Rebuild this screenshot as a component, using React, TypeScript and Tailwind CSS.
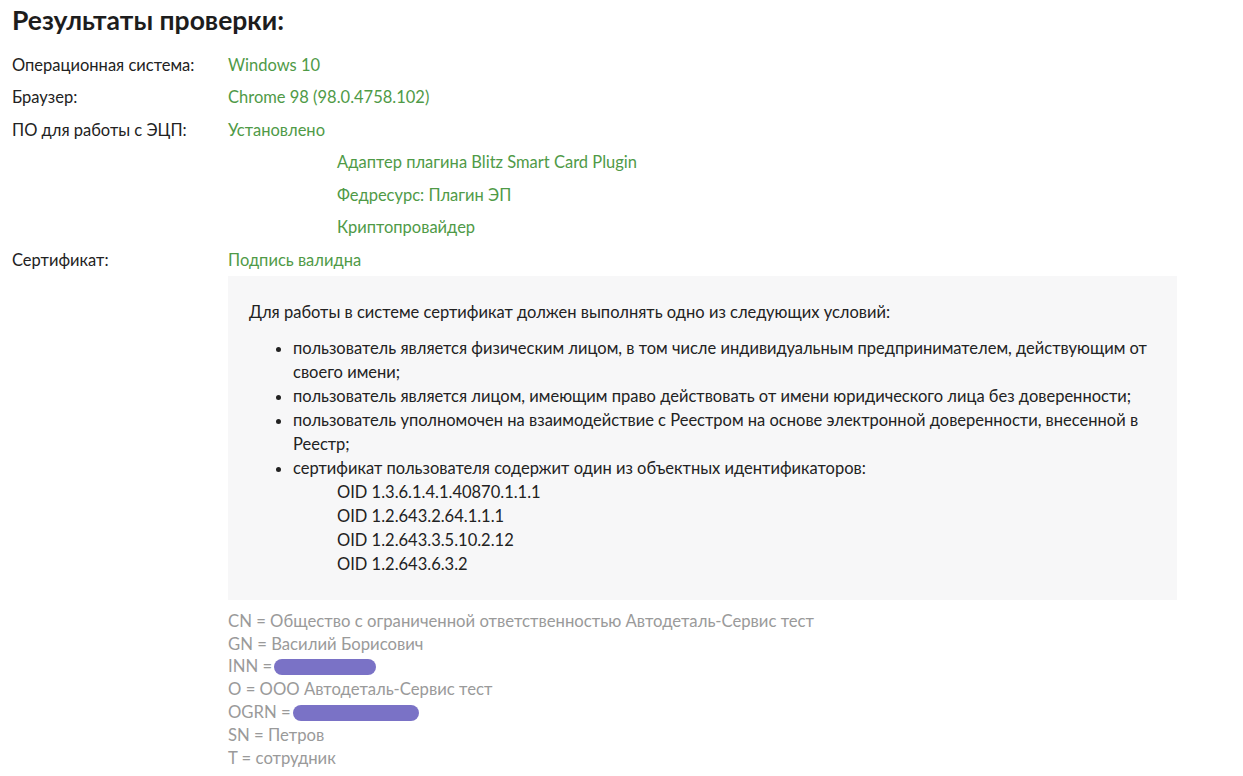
const GREEN = "text-[#4f9a47]";

const rows: { label: string; value: string; subs?: string[] }[] = [
  { label: "Операционная система:", value: "Windows 10" },
  { label: "Браузер:", value: "Chrome 98 (98.0.4758.102)" },
  {
    label: "ПО для работы с ЭЦП:",
    value: "Установлено",
    subs: [
      "Адаптер плагина Blitz Smart Card Plugin",
      "Федресурс: Плагин ЭП",
      "Криптопровайдер",
    ],
  },
  { label: "Сертификат:", value: "Подпись валидна" },
];

const conditions = [
  "пользователь является физическим лицом, в том числе индивидуальным предпринимателем, действующим от своего имени;",
  "пользователь является лицом, имеющим право действовать от имени юридического лица без доверенности;",
  "пользователь уполномочен на взаимодействие с Реестром на основе электронной доверенности, внесенной в Реестр;",
];

const oids = [
  "OID 1.3.6.1.4.1.40870.1.1.1",
  "OID 1.2.643.2.64.1.1.1",
  "OID 1.2.643.3.5.10.2.12",
  "OID 1.2.643.6.3.2",
];

// purple marker strokes that hide personal data in the screenshot
function Redacted({ w }: { w: string }) {
  return <span className={`ml-[2px] inline-block h-[16px] ${w} rounded-full bg-[#7a72c6] align-[-3px]`} />;
}

export default function App() {
  return (
    <div className="min-h-screen bg-white px-3 pt-[6px] font-['Lato',sans-serif] text-[16.5px] text-[#222]">
      <h1 className="text-[26.5px] font-bold leading-[28px] text-[#1d1d1d]">Результаты проверки:</h1>

      <div className="mt-[14.75px] leading-[32.5px]">
        {rows.map((r) => (
          <div key={r.label}>
            <div className="flex">
              <span className="w-[216px] shrink-0">{r.label}</span>
              <span className={GREEN}>{r.value}</span>
            </div>
            {r.subs?.map((s) => (
              <div key={s} className={`pl-[325px] ${GREEN}`}>
                {s}
              </div>
            ))}
          </div>
        ))}
      </div>

      <div className="ml-[216px] w-[949px] bg-[#f7f7f8] pb-[24px] pl-[21px] pr-[17px] pt-[24px] leading-[24px] text-[#222]">
        <p>Для работы в системе сертификат должен выполнять одно из следующих условий:</p>
        <ul className="mt-[12px] list-disc pl-[44px]">
          {conditions.map((c) => (
            <li key={c}>{c}</li>
          ))}
          <li>
            сертификат пользователя содержит один из объектных идентификаторов:
            <div className="pl-[44px]">
              {oids.map((o) => (
                <div key={o}>{o}</div>
              ))}
            </div>
          </li>
        </ul>
      </div>

      <div className="ml-[216px] mt-[9.5px] text-[16.7px] leading-[22.8px] text-[#9a9a9a]">
        <div>CN = Общество с ограниченной ответственностью Автодеталь-Сервис тест</div>
        <div>GN = Василий Борисович</div>
        <div>
          INN =<Redacted w="w-[102px]" />
        </div>
        <div>O = ООО Автодеталь-Сервис тест</div>
        <div>
          OGRN =<Redacted w="w-[126px]" />
        </div>
        <div>SN = Петров</div>
        <div>T = сотрудник</div>
      </div>
    </div>
  );
}
